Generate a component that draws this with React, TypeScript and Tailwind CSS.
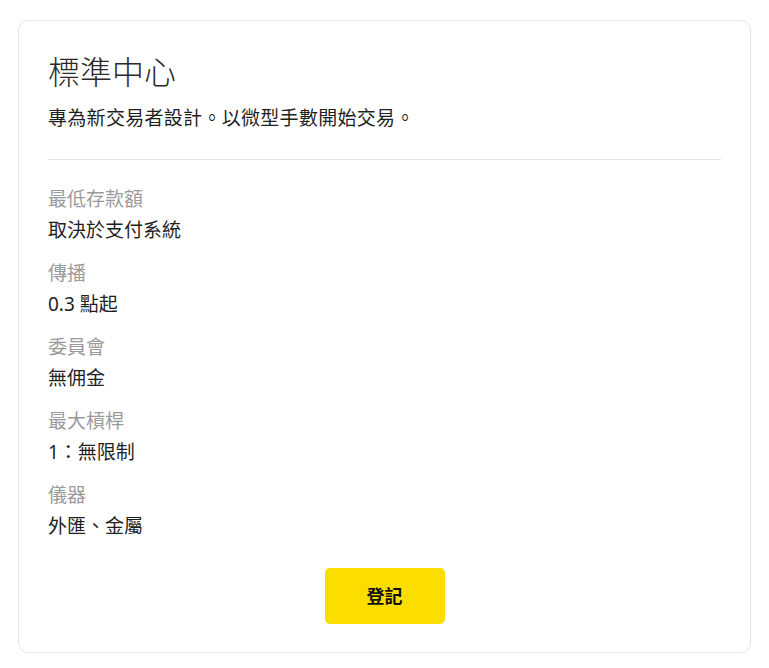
const specs = [
  { label: '最低存款額', value: '取決於支付系統' },
  { label: '傳播', value: '0.3 點起' },
  { label: '委員會', value: '無佣金' },
  { label: '最大槓桿', value: '1：無限制' },
  { label: '儀器', value: '外匯、金屬' },
];

export default function App() {
  return (
    <div
      className="min-h-screen bg-white px-[18px] pt-[20px] pb-[14px]"
      style={{ fontFamily: '"Noto Sans", "Noto Sans CJK TC", sans-serif' }}
    >
      <div className="rounded-[10px] border border-[#e4e4e4] bg-white px-[29px] pt-[30px] pb-[28px]">
        {/* Header */}
        <h2 className="text-[32px] font-light leading-[42px] text-[#2b2b2b]">標準中心</h2>
        <p className="mt-[10px] text-[19px] leading-[31px] tracking-[0.3px] text-[#1f1f1f]">
          專為新交易者設計。以微型手數開始交易。
        </p>

        <div className="mt-[25px] border-t border-[#e2e2e2]" />

        {/* Specs */}
        <div className="mt-[24px] space-y-[12px]">
          {specs.map((s) => (
            <div key={s.label}>
              <p className="text-[19px] leading-[31px] text-[#9a9a9a]">{s.label}</p>
              <p className="text-[19px] leading-[31px] text-[#1f1f1f]">{s.value}</p>
            </div>
          ))}
        </div>

        {/* Action */}
        <div className="mt-[26px] flex justify-center">
          <button className="h-[56px] w-[120px] rounded-[5px] bg-[#fcdd00] text-[18px] font-bold text-[#111]">
            登記
          </button>
        </div>
      </div>
    </div>
  );
}
